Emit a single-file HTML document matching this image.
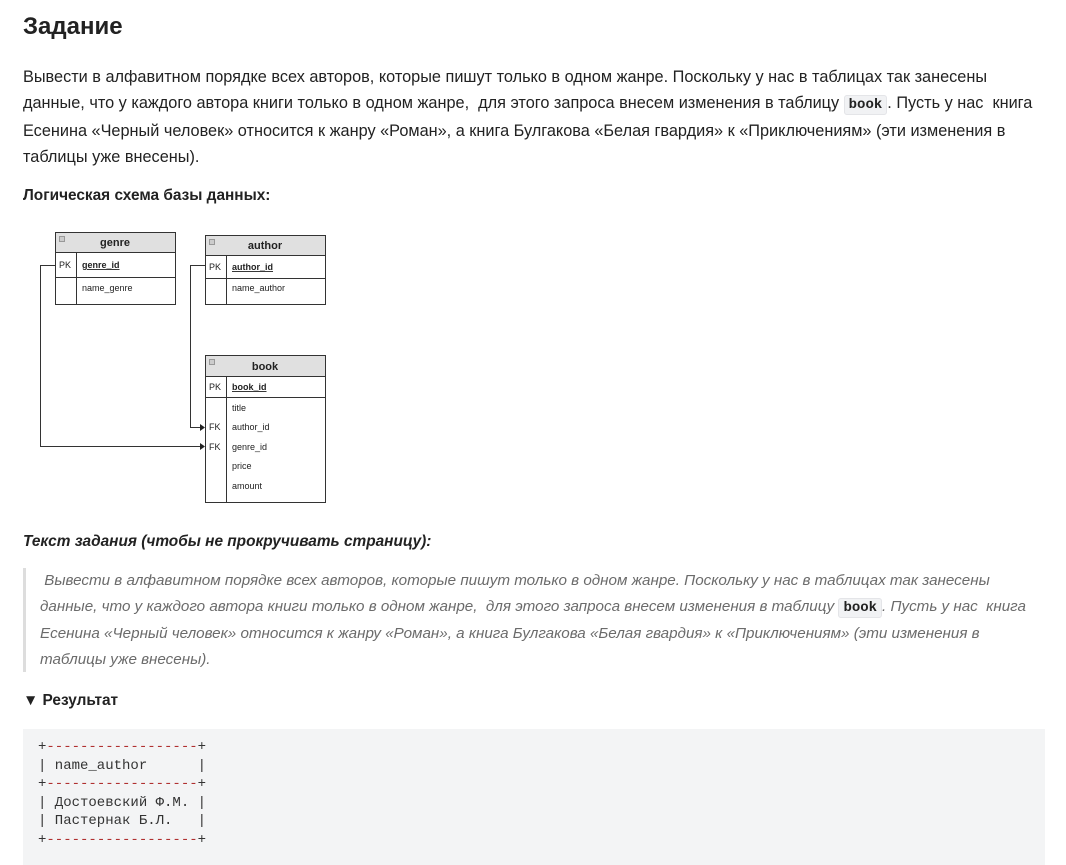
<!DOCTYPE html>
<html><head><meta charset="utf-8"><style>
body{margin:0;background:#fff;font-family:"Liberation Sans",sans-serif;color:#222;}
.w{position:relative;width:1066px;height:865px;overflow:hidden}
h1{position:absolute;left:23px;top:13px;margin:0;font-size:24px;font-weight:bold;color:#222}
.p{position:absolute;left:23px;font-size:16.3px;line-height:26px;white-space:nowrap}
code{font-family:"Liberation Mono",monospace;font-weight:bold;background:#f1f2f4;border:1px solid #e4e5e8;border-radius:3px;padding:1px 4px;font-size:14px}
.b{position:absolute;left:23px;font-size:15.4px;font-weight:bold}
.q{position:absolute;left:23px;top:568px;border-left:3px solid #ddd;padding-left:14px;font-style:italic;color:#6b6b6b;font-size:15.2px;line-height:26px;white-space:nowrap;height:104px}
pre{position:absolute;left:23px;top:729px;width:1022px;height:140px;margin:0;background:#f3f4f5;font-family:"Liberation Mono",monospace;font-size:14px;line-height:18.5px;padding:9px 0 0 15px;box-sizing:border-box;color:#333}
.r{color:#b03030}
</style></head><body><div class="w">
<h1>Задание</h1>
<div class="p" style="top:64px">Вывести в алфавитном порядке всех авторов, которые пишут только в одном жанре. Поскольку у нас в таблицах так занесены<br>данные, что у каждого автора книги только в одном жанре,&nbsp; для этого запроса внесем изменения в таблицу <code>book</code>. Пусть у нас&nbsp; книга<br>Есенина «Черный человек» относится к жанру «Роман», а книга Булгакова «Белая гвардия» к «Приключениям» (эти изменения в<br>таблицы уже внесены).</div>
<div class="b" style="top:187px">Логическая схема базы данных:</div>
<svg style="position:absolute;left:0;top:0" width="400" height="520" font-family="Liberation Sans,sans-serif" font-size="9" fill="#222">
<g stroke="#333" fill="none">
<rect x="55.5" y="232.5" width="120" height="72" fill="#fff"/><rect x="55.5" y="232.5" width="120" height="20" fill="#e0e0e0"/>
<line x1="55" y1="277.5" x2="175" y2="277.5"/><line x1="76.5" y1="252" x2="76.5" y2="304"/>
<rect x="205.5" y="235.5" width="120" height="69" fill="#fff"/><rect x="205.5" y="235.5" width="120" height="20" fill="#e0e0e0"/>
<line x1="205" y1="278.5" x2="325" y2="278.5"/><line x1="226.5" y1="255" x2="226.5" y2="304"/>
<rect x="205.5" y="355.5" width="120" height="147" fill="#fff"/><rect x="205.5" y="355.5" width="120" height="21" fill="#e0e0e0"/>
<line x1="205" y1="397.5" x2="325" y2="397.5"/><line x1="226.5" y1="376" x2="226.5" y2="502"/>
<polyline points="55,265.5 40.5,265.5 40.5,446.5 200,446.5"/>
<polyline points="205,265.5 190.5,265.5 190.5,427.5 200,427.5"/>
<rect x="59.5" y="236.5" width="5" height="5" fill="#ccc" stroke="#999"/><rect x="209.5" y="239.5" width="5" height="5" fill="#ccc" stroke="#999"/><rect x="209.5" y="359.5" width="5" height="5" fill="#ccc" stroke="#999"/>
</g>
<path d="M200,443 L205,446.5 L200,450Z M200,424 L205,427.5 L200,431Z" fill="#222"/>
<g font-weight="bold" font-size="11" text-anchor="middle"><text x="115" y="246">genre</text><text x="265" y="249">author</text><text x="265" y="370">book</text></g>
<text x="59" y="268">PK</text><text x="82" y="268" text-decoration="underline" font-weight="bold">genre_id</text><text x="82" y="291">name_genre</text>
<text x="209" y="270">PK</text><text x="232" y="270" text-decoration="underline" font-weight="bold">author_id</text><text x="232" y="291">name_author</text>
<text x="209" y="390">PK</text><text x="232" y="390" text-decoration="underline" font-weight="bold">book_id</text>
<text x="232" y="411">title</text><text x="209" y="430">FK</text><text x="232" y="430">author_id</text><text x="209" y="450">FK</text><text x="232" y="450">genre_id</text><text x="232" y="469">price</text><text x="232" y="489">amount</text>
</svg>
<div class="b" style="top:533px;font-style:italic">Текст задания (чтобы не прокручивать страницу):</div>
<div class="q">&nbsp;Вывести в алфавитном порядке всех авторов, которые пишут только в одном жанре. Поскольку у нас в таблицах так занесены<br>данные, что у каждого автора книги только в одном жанре,&nbsp; для этого запроса внесем изменения в таблицу <code style="color:#222;font-style:normal">book</code>. Пусть у нас&nbsp; книга<br>Есенина «Черный человек» относится к жанру «Роман», а книга Булгакова «Белая гвардия» к «Приключениям» (эти изменения в<br>таблицы уже внесены).</div>
<div class="b" style="top:692px">▼ Результат</div>
<pre>+<span class="r">------------------</span>+
| name_author      |
+<span class="r">------------------</span>+
| Достоевский Ф.М. |
| Пастернак Б.Л.   |
+<span class="r">------------------</span>+</pre>
</div></body></html>
